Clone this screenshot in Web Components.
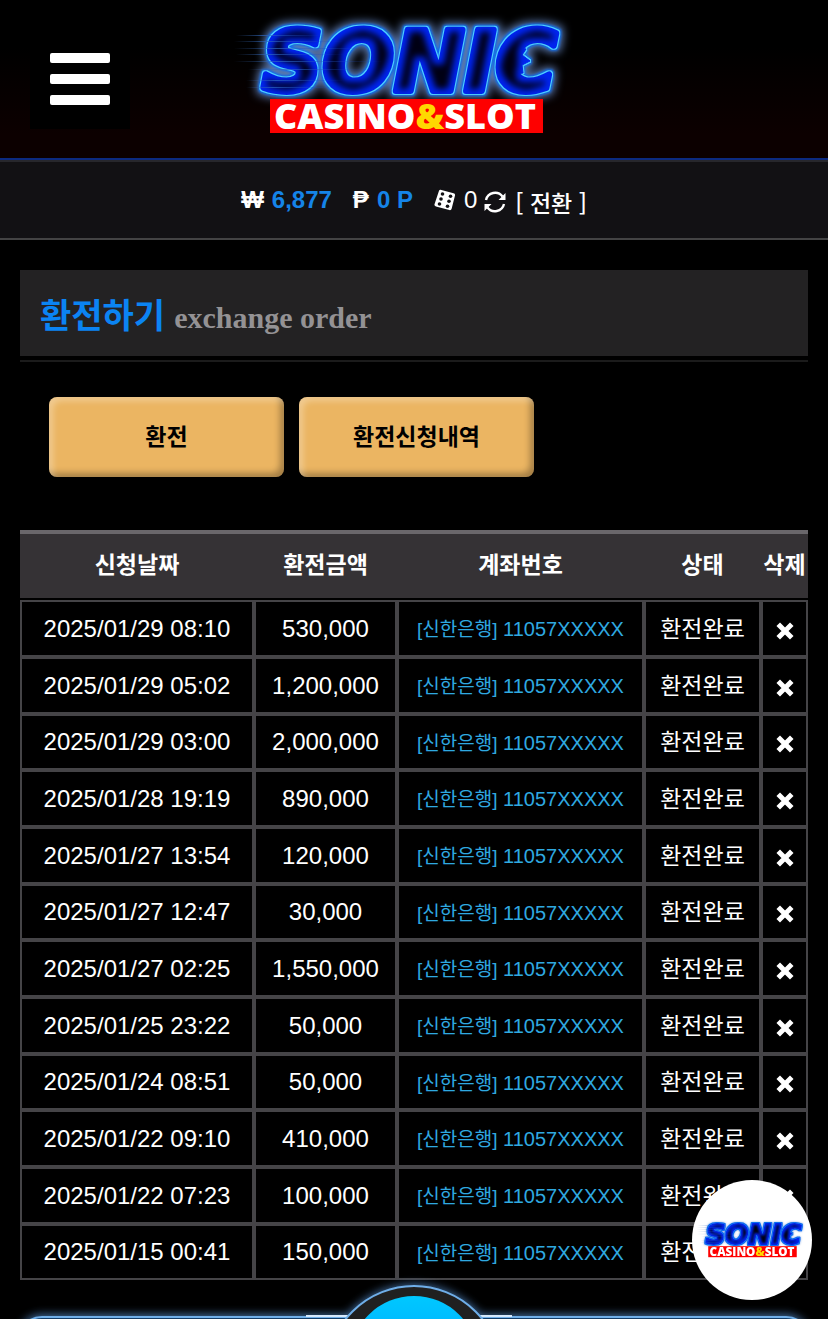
<!DOCTYPE html>
<html lang="ko">
<head>
<meta charset="utf-8">
<meta name="viewport" content="width=device-width, initial-scale=1">
<title>환전하기</title>
<style>
    body {
        margin: 0;
        background: #000;
        color: #fff;
        font-family: "Liberation Sans", "Noto Sans CJK KR", sans-serif;
        font-size: 24px;
    }
</style>
</head>
<body>
<site-header></site-header>
<balance-bar></balance-bar>
<main>
    <page-title sub="exchange order">환전하기</page-title>
    <tab-buttons>
        <gold-button>환전</gold-button>
        <gold-button>환전신청내역</gold-button>
    </tab-buttons>
    <history-table></history-table>
</main>
<bottom-nav></bottom-nav>
<chat-badge></chat-badge>

<script>
function mount(element, html) {
    const template = document.createElement("template");
    template.innerHTML = html;
    element.attachShadow({ mode: "open" });
    element.shadowRoot.appendChild(template.content.cloneNode(true));
}

class SonicLogo extends HTMLElement {
    CSS = `:host { display: block; }
    svg { display: block; width: 100%; height: auto; }
    .sonic { font: italic 700 84px "DejaVu Sans", sans-serif; }
    .sub { font: 800 36px "Open Sans", sans-serif; }`;

    constructor() {
        super();
        mount(this, `<style>${this.CSS}</style>
        <svg viewBox="0 0 370 140" role="img" aria-label="Sonic Casino &amp; Slot">
            <defs>
                <filter id="neon" filterUnits="userSpaceOnUse" x="0" y="0" width="370" height="110" color-interpolation-filters="sRGB">
                    <feMorphology in="SourceAlpha" operator="dilate" radius="4" result="wide"/>
                    <feGaussianBlur in="wide" stdDeviation="4" result="haze"/>
                    <feFlood flood-color="#6f95d8" flood-opacity=".8"/>
                    <feComposite in2="haze" operator="in" result="glow"/>
                    <feMorphology in="SourceAlpha" operator="dilate" radius="2" result="fat"/>
                    <feGaussianBlur in="fat" stdDeviation="1" result="soft"/>
                    <feFlood flood-color="#0b6cf0"/>
                    <feComposite in2="soft" operator="in" result="halo"/>
                    <feMorphology in="SourceAlpha" operator="dilate" radius="1" result="line"/>
                    <feFlood flood-color="#4fd0ff"/>
                    <feComposite in2="line" operator="in" result="edge"/>
                    <feMorphology in="SourceAlpha" operator="erode" radius="5" result="thin"/>
                    <feGaussianBlur in="thin" stdDeviation="3" result="inner"/>
                    <feFlood flood-color="#000014"/>
                    <feComposite in2="inner" operator="in" result="core"/>
                    <feMerge>
                        <feMergeNode in="glow"/><feMergeNode in="halo"/><feMergeNode in="edge"/>
                        <feMergeNode in="SourceGraphic"/><feMergeNode in="core"/>
                    </feMerge>
                </filter>
                <linearGradient id="speed"><stop stop-color="#3a66a8" stop-opacity="0"/><stop offset=".3" stop-color="#2f68c0" stop-opacity=".7"/><stop offset="1" stop-color="#1840c0" stop-opacity="0"/></linearGradient>
            </defs>
            <g filter="url(#neon)" fill="#0024f0" stroke="#0024f0" stroke-width="6" stroke-linejoin="round">
                <text class="sonic" x="42" y="82">SONIC</text>
                <path d="M294 38l12 2-4 6 8 6-8 4 1 8-14 2z" stroke-width="1"/>
            </g>
            <g fill="url(#speed)">
                <rect x="16" y="26" width="90" height="1"/><rect x="14" y="32" width="110" height="1"/>
                <rect x="14" y="39" width="140" height="1"/><rect x="16" y="45" width="110" height="1"/>
                <rect x="14" y="52" width="150" height="1"/><rect x="28" y="60" width="120" height="1"/>
                <rect x="26" y="71" width="100" height="1"/><rect x="26" y="78" width="90" height="1"/>
            </g>
            <rect x="50" y="90" width="273" height="34" fill="#fe0000"/>
            <text class="sub" x="185" y="120" text-anchor="middle" fill="#fff">CASINO<tspan fill="#ffd800">&amp;</tspan>SLOT</text>
        </svg>`);
    }
}

class SiteHeader extends HTMLElement {
    CSS = `:host {
        display: grid;
        grid-template-columns: 100px 1fr 100px;
        align-items: center;
        justify-items: center;
        box-sizing: border-box;
        min-height: 160px;
        padding: 0 48px 0 30px;
        background: linear-gradient(#000 30%, #0c0000 85%);
        border-bottom: 2px solid #0c2a80;
    }
    button {
        display: flex;
        flex-direction: column;
        justify-content: center;
        gap: 11px;
        width: 100px;
        height: 100px;
        padding: 0 20px;
        border: 0;
        background: #000;
    }
    i { height: 10px; border-radius: 2px; background: #fff; }
    a { display: block; width: 100%; max-width: 370px; }`;

    constructor() {
        super();
        mount(this, `<style>${this.CSS}</style>
        <button type="button" aria-label="메뉴"><i></i><i></i><i></i></button>
        <a href="#"><sonic-logo></sonic-logo></a>`);
    }
}

class BalanceBar extends HTMLElement {
    CSS = `:host {
        display: flex;
        justify-content: center;
        align-items: center;
        box-sizing: border-box;
        min-height: 80px;
        background: #121114;
        border-top: 2px solid #27272c;
        border-bottom: 2px solid #434344;
        line-height: 28px;
    }
    .money { display: flex; gap: 8px; margin-right: 21px; font-weight: 700; }
    .money b { color: #1584e8; }
    .dice { display: flex; align-items: center; gap: 8px; margin-right: 7px; }
    svg { display: block; }
    button {
        display: flex;
        align-items: center;
        gap: 9px;
        padding: 4px 0 0;
        border: 0;
        background: none;
        color: #fff;
        font: 500 23px/28px "Noto Sans CJK KR", sans-serif;
    }`;

    constructor() {
        super();
        mount(this, `<style>${this.CSS}</style>
        <span class="money"><span>₩</span><b>6,877</b></span>
        <span class="money"><span>₱</span><b>0 P</b></span>
        <span class="dice">
            <svg width="22" height="22" viewBox="0 0 22 22" aria-hidden="true">
                <path d="M6.500 .8l13 3.400a2 2 0 0 1 1.500 2.400l-3.300 13a2 2 0 0 1-2.400 1.500L2 17.500a2 2 0 0 1-1.400-2.600L5 1.700a1.500 1.500 0 0 1 1.500-.9z" fill="#fff"/>
                <g fill="#121114"><circle cx="8.500" cy="5" r="1.800"/><circle cx="7" cy="10" r="1.800"/><circle cx="5.500" cy="15" r="1.800"/><circle cx="16.500" cy="7.200" r="1.800"/><circle cx="15" cy="12.200" r="1.800"/><circle cx="13.500" cy="17.200" r="1.800"/></g>
            </svg>
            <span>0</span>
        </span>
        <button type="button">
            <svg width="22" height="22" viewBox="0 0 22 22" fill="none" stroke="#fff" stroke-width="2.400" aria-hidden="true">
                <path d="M2 9a9.300 9.300 0 0 1 16.500-3.500M20 13a9.300 9.300 0 0 1-16.500 3.500"/>
                <path d="M21.500 2v7h-7zM.5 20v-7h7z" fill="#fff" stroke="none"/>
            </svg>
            <span>[ 전환 ]</span>
        </button>`);
    }
}

class PageTitle extends HTMLElement {
    CSS = `:host { display: block; margin: 30px 20px 0; border-bottom: 2px solid #1b1b1b; padding-bottom: 4px; }
    h1 {
        display: flex;
        align-items: baseline;
        gap: 9px;
        margin: 0;
        padding: 21px 20px 15px;
        background: #232223;
        color: #0b84f3;
        font-size: 34px;
        font-weight: 700;
        line-height: 50px;
    }
    small { color: #949294; font: 700 30px "Liberation Serif", serif; }`;

    constructor() {
        super();
        mount(this, `<style>${this.CSS}</style>
        <h1><slot></slot><small>${this.getAttribute("sub")}</small></h1>`);
    }
}

class TabButtons extends HTMLElement {
    CSS = `:host { display: flex; flex-wrap: wrap; gap: 15px; margin: 35px 49px 53px; }`;

    constructor() {
        super();
        mount(this, `<style>${this.CSS}</style><slot></slot>`);
    }
}

class GoldButton extends HTMLElement {
    CSS = `:host { display: block; flex: 0 1 235px; }
    button {
        display: block;
        width: 100%;
        height: 80px;
        padding: 0 0 4px;
        border: 0;
        border-radius: 8px;
        background: #ebb562;
        box-shadow: inset 4px 4px 6px rgba(255, 255, 255, .3), inset -4px -4px 6px rgba(0, 0, 0, .3);
        color: #000;
        font: 700 23px "Liberation Sans", "Noto Sans CJK KR", sans-serif;
    }`;

    constructor() {
        super();
        mount(this, `<style>${this.CSS}</style><button type="button"><slot></slot></button>`);
    }
}

class HistoryTable extends HTMLElement {
    CSS = `:host { display: block; margin: 0 20px 39px; }
    table { width: 100%; table-layout: fixed; border-collapse: separate; border-spacing: 0; }
    .amount { width: 143px; }
    .account { width: 247px; }
    .state { width: 117px; }
    .remove { width: 47px; }
    th, td { box-sizing: border-box; padding: 0; text-align: center; white-space: nowrap; }
    th {
        height: 70px;
        padding-bottom: 6px;
        background: #353235;
        border-top: 4px solid #6a676b;
        border-bottom: 2px solid #000;
        font-size: 23px;
        font-weight: 700;
    }
    td { height: 57px; border: 2px solid #454447; line-height: 32px; }
    tr:nth-child(3n) td { height: 56px; }
    .bank { padding-top: 2px; color: #2fa9e0; font-size: 20px; }
    .bank span { font-size: 19px; }
    .done { font-size: 23px; }
    button { display: block; margin: 0 auto; padding: 4px 0 0; border: 0; background: none; }
    svg { display: block; }`;

    ROWS = [
        ["2025/01/29 08:10", "530,000"],
        ["2025/01/29 05:02", "1,200,000"],
        ["2025/01/29 03:00", "2,000,000"],
        ["2025/01/28 19:19", "890,000"],
        ["2025/01/27 13:54", "120,000"],
        ["2025/01/27 12:47", "30,000"],
        ["2025/01/27 02:25", "1,550,000"],
        ["2025/01/25 23:22", "50,000"],
        ["2025/01/24 08:51", "50,000"],
        ["2025/01/22 09:10", "410,000"],
        ["2025/01/22 07:23", "100,000"],
        ["2025/01/15 00:41", "150,000"]
    ];

    constructor() {
        super();
        mount(this, `<style>${this.CSS}</style>
        <table>
            <colgroup><col><col class="amount"><col class="account"><col class="state"><col class="remove"></colgroup>
            <thead><tr><th>신청날짜</th><th>환전금액</th><th>계좌번호</th><th>상태</th><th>삭제</th></tr></thead>
            <tbody>${this.ROWS.map(row => this.row(row)).join("")}</tbody>
        </table>`);
    }

    row([date, amount]) {
        return `<tr>
            <td>${date}</td>
            <td>${amount}</td>
            <td class="bank"><span>[신한은행]</span> 11057XXXXX</td>
            <td class="done">환전완료</td>
            <td><button type="button" aria-label="삭제"><svg width="18" height="18" viewBox="0 0 18 18"><path d="M4 4l10 10M14 4L4 14" stroke="#fff" stroke-width="5" stroke-linecap="square"/></svg></button></td>
        </tr>`;
    }
}

class BottomNav extends HTMLElement {
    CSS = `:host { display: block; position: fixed; left: 0; right: 0; bottom: 0; pointer-events: none; }
    svg { display: block; width: 100%; height: auto; }
    a { pointer-events: auto; }`;

    constructor() {
        super();
        mount(this, `<style>${this.CSS}</style>
        <svg viewBox="0 0 828 49">
            <defs>
                <filter id="blur" filterUnits="userSpaceOnUse" x="0" y="0" width="828" height="120"><feGaussianBlur stdDeviation="4"/></filter>
                <linearGradient id="cyan" x1="0" y1="0" x2="0" y2="1"><stop stop-color="#00c8ff"/><stop offset="1" stop-color="#008cff"/></linearGradient>
            </defs>
            <g fill="#4d7fb8" filter="url(#blur)" opacity=".8">
                <rect x="18" y="44" width="792" height="60" rx="24"/>
                <circle cx="414" cy="103" r="89"/>
            </g>
            <rect x="18" y="47" width="792" height="60" rx="24" fill="#123c68" stroke="#6faee8" stroke-width="2"/>
            <path d="M306 46h206" stroke="#d5e8fb" stroke-width="2"/>
            <circle cx="414" cy="103" r="87" fill="#202020" stroke="#6faee8" stroke-width="2"/>
            <a href="#" aria-label="홈"><circle cx="414" cy="90" r="64" fill="url(#cyan)"/></a>
        </svg>`);
    }
}

class ChatBadge extends HTMLElement {
    CSS = `:host { position: fixed; right: 16px; bottom: 19px; }
    a {
        display: flex;
        align-items: center;
        justify-content: center;
        width: 120px;
        height: 120px;
        border-radius: 50%;
        background: #fff;
    }
    sonic-logo { width: 100%; }`;

    constructor() {
        super();
        mount(this, `<style>${this.CSS}</style><a href="#"><sonic-logo></sonic-logo></a>`);
    }
}

window.customElements.define("sonic-logo", SonicLogo);
window.customElements.define("site-header", SiteHeader);
window.customElements.define("balance-bar", BalanceBar);
window.customElements.define("page-title", PageTitle);
window.customElements.define("tab-buttons", TabButtons);
window.customElements.define("gold-button", GoldButton);
window.customElements.define("history-table", HistoryTable);
window.customElements.define("bottom-nav", BottomNav);
window.customElements.define("chat-badge", ChatBadge);
</script>
</body>
</html>
